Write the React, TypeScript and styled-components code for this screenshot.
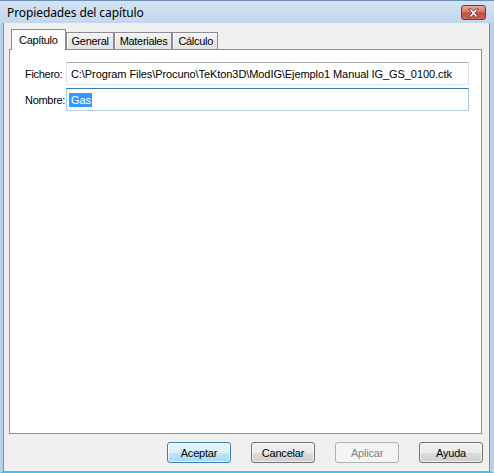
import React from "react";
import styled, { createGlobalStyle } from "styled-components";

const GlobalStyle = createGlobalStyle`
  html, body {
    margin: 0;
    padding: 0;
    background: #ffffff;
  }
  body {
    font-family: "Liberation Sans", Arial, sans-serif;
    font-size: 11px;
    color: #000000;
  }
`;

const Window = styled.div`
  width: 494px;
  height: 473px;
  box-sizing: border-box;
  display: flex;
  flex-direction: column;
  background: #f0f0f0;
  border-left: 3px solid #b9d0ea;
  border-right: 4px solid #b9d0ea;
  border-bottom: 2px solid #3cc3ee;
  box-shadow: inset 1px 0 0 #6d8fb7, inset -1px 0 0 #6d8fb7;
`;

const TitleBar = styled.div`
  height: 23px;
  flex: none;
  display: flex;
  align-items: center;
  justify-content: space-between;
  padding: 0 4px 0 4px;
  margin: 0 -4px 0 -3px;
  background: linear-gradient(#d3e3f4, #c2d7ee);
  border-top: 1px solid #6d8fb7;
  box-sizing: border-box;
`;

const Title = styled.span`
  font-family: "Noto Sans", "Open Sans", sans-serif;
  font-size: 12px;
  color: #000000;
  padding-left: 3px;
  padding-top: 1px;
  letter-spacing: -0.1px;
`;

const CloseButton = styled.div`
  width: 25px;
  height: 15px;
  margin-right: 4px;
  margin-top: 1px;
  box-sizing: border-box;
  border: 1px solid #7c3434;
  border-radius: 3px;
  background: linear-gradient(#e9a99b 0%, #d67766 45%, #c24a3a 55%, #cf6c58 100%);
  display: flex;
  align-items: center;
  justify-content: center;
`;

const Body = styled.div`
  flex: 1;
  display: flex;
  flex-direction: column;
  padding: 6px 8px 8px 6px;
  min-height: 0;
`;

const TabStrip = styled.div`
  display: flex;
  align-items: flex-end;
  height: 20px;
  padding-left: 2px;
  position: relative;
  z-index: 1;
`;

const Tab = styled.div<{ $active?: boolean }>`
  box-sizing: border-box;
  height: ${(p) => (p.$active ? "21px" : "17px")};
  margin-bottom: ${(p) => (p.$active ? "-1px" : "0")};
  padding: ${(p) => (p.$active ? "3px 7px 0 7px" : "1px 4px 0 5px")};
  border: 1px solid #898c95;
  border-bottom: none;
  background: ${(p) => (p.$active ? "#ffffff" : "linear-gradient(#f3f3f3, #e3e3e3)")};
  box-shadow: ${(p) => (p.$active ? "none" : "inset 1px 1px 0 #fafafa")};
  font-size: 11px;
  line-height: 14px;
  letter-spacing: -0.3px;
  white-space: nowrap;
`;

const Panel = styled.div`
  flex: 1;
  background: #ffffff;
  border: 1px solid #898c95;
  padding: 12px 12px 0 15px;
`;

const Fields = styled.div`
  display: grid;
  grid-template-columns: 41px 1fr;
  row-gap: 3px;
  align-items: center;
`;

const Label = styled.span`
  font-size: 11px;
  letter-spacing: -0.3px;
`;

const TextBox = styled.div<{ $focused?: boolean }>`
  height: 23px;
  box-sizing: border-box;
  display: flex;
  align-items: center;
  padding-left: 4px;
  background: #ffffff;
  border: 1px solid ${(p) => (p.$focused ? "#a4c9e3" : "#e2e3ea")};
  border-top-color: ${(p) => (p.$focused ? "#3d7bad" : "#abadb3")};
  border-bottom-color: ${(p) => (p.$focused ? "#b5cfe7" : "#e3e9ef")};
  font-size: 11px;
  letter-spacing: -0.08px;
  white-space: nowrap;
  overflow: hidden;
`;

const Selected = styled.span`
  background: #3399ff;
  color: #ffffff;
  padding: 1px 1px 1px 2px;
  margin-left: -2px;
`;

const ButtonRow = styled.div`
  display: flex;
  justify-content: flex-end;
  gap: 20px;
  padding-top: 8px;
  margin-right: -1px;
`;

const Button = styled.div<{ $variant?: "default" | "disabled" }>`
  width: 64px;
  height: 21px;
  box-sizing: border-box;
  border-radius: 3px;
  display: flex;
  align-items: center;
  justify-content: center;
  font-size: 11px;
  letter-spacing: -0.2px;
  border: 1px solid
    ${(p) => (p.$variant === "default" ? "#3c7fb1" : p.$variant === "disabled" ? "#adb2b5" : "#707070")};
  color: ${(p) => (p.$variant === "disabled" ? "#838383" : "#000000")};
  background: ${(p) =>
    p.$variant === "default"
      ? "linear-gradient(#eaf6fd 0%, #d9f0fc 50%, #bee6fd 50%, #a7d9f5 100%)"
      : p.$variant === "disabled"
      ? "#f4f4f4"
      : "linear-gradient(#f2f2f2 0%, #ebebeb 50%, #dddddd 50%, #cfcfcf 100%)"};
  box-shadow: ${(p) => (p.$variant === "disabled" ? "none" : "inset 0 0 0 1px rgba(255,255,255,0.7)")};
`;

function CloseIcon() {
  return (
    <svg width="13" height="10" viewBox="0 0 13 10">
      <path
        d="M1.5 1 H4.5 L6.5 3.2 L8.5 1 H11.5 L8 5 L11.5 9 H8.5 L6.5 6.8 L4.5 9 H1.5 L5 5 Z"
        fill="#ffffff"
        stroke="#5a1f1f"
        strokeWidth="0.8"
        strokeLinejoin="round"
      />
    </svg>
  );
}

export default function App() {
  return (
    <>
      <GlobalStyle />
      <Window>
        <TitleBar>
          <Title>Propiedades del capítulo</Title>
          <CloseButton>
            <CloseIcon />
          </CloseButton>
        </TitleBar>
        <Body>
          <TabStrip>
            <Tab $active>Capítulo</Tab>
            <Tab>General</Tab>
            <Tab>Materiales</Tab>
            <Tab>Cálculo</Tab>
          </TabStrip>
          <Panel>
            <Fields>
              <Label>Fichero:</Label>
              <TextBox>C:\Program Files\Procuno\TeKton3D\ModIG\Ejemplo1 Manual IG_GS_0100.ctk</TextBox>
              <Label>Nombre:</Label>
              <TextBox $focused>
                <Selected>Gas</Selected>
              </TextBox>
            </Fields>
          </Panel>
          <ButtonRow>
            <Button $variant="default">Aceptar</Button>
            <Button>Cancelar</Button>
            <Button $variant="disabled">Aplicar</Button>
            <Button>Ayuda</Button>
          </ButtonRow>
        </Body>
      </Window>
    </>
  );
}
